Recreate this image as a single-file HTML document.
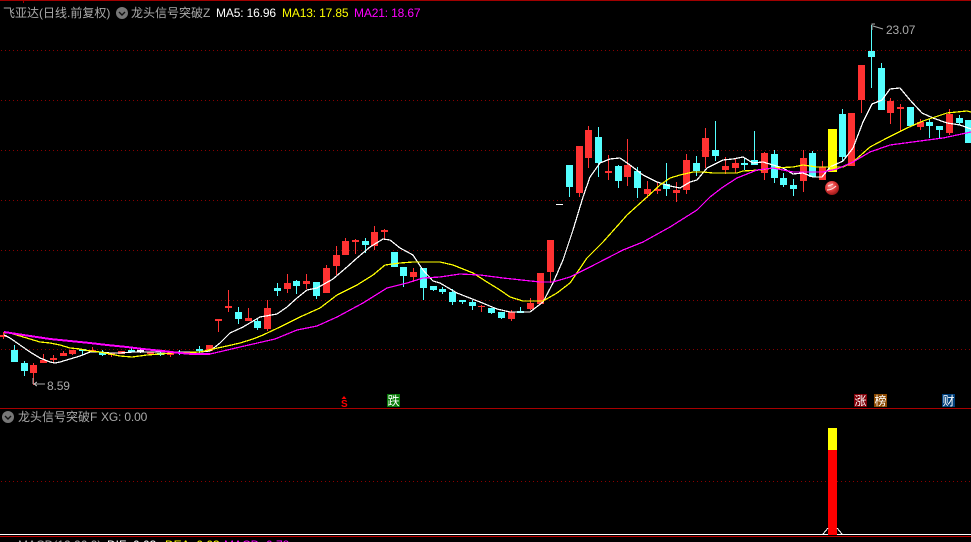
<!DOCTYPE html>
<html><head><meta charset="utf-8"><style>
html,body{margin:0;padding:0;background:#000;width:971px;height:542px;overflow:hidden}
svg{display:block;position:absolute;left:0;top:0}
text{font-family:"Liberation Sans","WenQuanYi Zen Hei","Noto Sans CJK SC",sans-serif;font-size:12px}
.m{letter-spacing:-.15px}
</style></head><body>
<svg width="971" height="542" viewBox="0 0 971 542" xmlns="http://www.w3.org/2000/svg">
<defs><radialGradient id="b" cx="40%" cy="35%" r="70%"><stop offset="0" stop-color="#ff9a9a"/><stop offset=".5" stop-color="#e23a3a"/><stop offset="1" stop-color="#8e1515"/></radialGradient></defs>
<rect width="971" height="542" fill="#000"/>
<g stroke="#8a0000" stroke-width="1" stroke-dasharray="1 3" shape-rendering="crispEdges">
<path d="M1 50.5H971M1 100.5H971M1 150.5H971M1 200.5H971M1 250.5H971M1 300.5H971M1 349.5H971M1 481.5H971"/>
</g>
<g shape-rendering="crispEdges">
<path fill="#ff3232" d="M0 335h7v2h-7zM3 332h1v7h-1z
M30 365h7v8h-7zM33 363h1v22h-1z
M40 360h7v3h-7zM43 354h1v9h-1z
M50 358h7v2h-7zM53 355h1v8h-1z
M60 353h7v3h-7zM63 351h1v5h-1z
M69 350h7v4h-7zM72 350h1v5h-1z
M89 350h7v2h-7zM92 347h1v5h-1z
M108 353h7v2h-7zM111 353h1v4h-1z
M118 351h7v3h-7z
M147 352h7v2h-7zM150 352h1v3h-1z
M167 352h7v3h-7zM170 352h1v5h-1z
M186 353h7v1h-7zM189 352h1v3h-1z
M206 345h7v6h-7zM209 345h1v7h-1z
M215 319h7v2h-7zM218 319h1v13h-1z
M225 306h7v2h-7zM228 290h1v22h-1z
M245 318h7v3h-7zM248 308h1v13h-1z
M264 308h7v21h-7zM267 300h1v31h-1z
M284 283h7v6h-7zM287 274h1v19h-1z
M303 281h7v3h-7zM306 274h1v15h-1z
M323 268h7v25h-7zM326 265h1v28h-1z
M333 255h7v11h-7zM336 246h1v29h-1z
M342 241h7v14h-7zM345 238h1v17h-1z
M352 240h7v2h-7zM355 239h1v15h-1z
M371 232h7v14h-7zM374 226h1v24h-1z
M381 230h7v2h-7zM384 229h1v10h-1z
M410 272h7v5h-7zM413 268h1v14h-1z
M478 306h7v1h-7zM481 305h1v7h-1z
M508 312h7v7h-7zM511 310h1v11h-1z
M527 303h7v6h-7zM530 298h1v12h-1z
M537 273h7v31h-7z
M547 240h7v32h-7zM550 240h1v43h-1z
M576 146h7v47h-7zM579 146h1v51h-1z
M585 130h7v28h-7zM588 126h1v42h-1z
M605 171h7v2h-7zM608 155h1v25h-1z
M624 165h7v12h-7zM627 139h1v47h-1z
M644 189h7v5h-7zM647 181h1v17h-1z
M654 189h7v2h-7zM657 182h1v12h-1z
M673 190h7v3h-7zM676 182h1v20h-1z
M683 160h7v30h-7zM686 154h1v40h-1z
M702 138h7v19h-7zM705 128h1v40h-1z
M722 166h7v4h-7zM725 157h1v17h-1z
M732 163h7v5h-7zM735 158h1v15h-1z
M761 153h7v20h-7zM764 152h1v28h-1z
M800 158h7v23h-7zM803 150h1v42h-1z
M819 167h7v13h-7zM822 161h1v19h-1z
M848 113h7v53h-7z
M858 65h7v35h-7zM861 65h1v48h-1z
M887 101h7v12h-7zM890 98h1v26h-1z
M897 107h7v2h-7zM900 104h1v27h-1z
M917 122h7v5h-7zM920 119h1v11h-1z
M946 114h7v19h-7zM949 109h1v26h-1z"/>
<path fill="#54ffff" d="M11 350h7v12h-7zM14 345h1v17h-1z
M21 363h7v8h-7zM24 361h1v15h-1z
M79 349h7v2h-7zM82 349h1v6h-1z
M99 352h7v3h-7zM102 350h1v6h-1z
M128 350h7v2h-7zM131 348h1v4h-1z
M157 353h7v2h-7zM160 351h1v5h-1z
M176 352h7v1h-7zM179 350h1v5h-1z
M196 349h7v2h-7zM199 346h1v7h-1z
M235 312h7v7h-7zM238 307h1v17h-1z
M254 321h7v7h-7zM257 318h1v12h-1z
M274 288h7v3h-7zM277 283h1v13h-1z
M293 281h7v5h-7zM296 280h1v14h-1z
M313 282h7v14h-7zM316 282h1v17h-1z
M362 241h7v4h-7zM365 238h1v15h-1z
M391 252h7v15h-7z
M400 267h7v9h-7zM403 267h1v20h-1z
M420 268h7v20h-7zM423 268h1v32h-1z
M430 286h7v4h-7zM433 286h1v5h-1z
M439 289h7v3h-7zM442 287h1v7h-1z
M449 292h7v10h-7zM452 289h1v16h-1z
M459 300h7v2h-7zM462 300h1v4h-1z
M469 302h7v4h-7zM472 300h1v10h-1z
M488 308h7v5h-7zM491 308h1v6h-1z
M498 312h7v6h-7zM501 312h1v7h-1z
M517 311h7v2h-7zM520 307h1v6h-1z
M566 165h7v22h-7zM569 165h1v32h-1z
M595 137h7v26h-7zM598 127h1v50h-1z
M615 166h7v15h-7zM618 165h1v23h-1z
M634 171h7v17h-7zM637 167h1v31h-1z
M663 184h7v5h-7zM666 163h1v33h-1z
M693 163h7v8h-7zM696 156h1v20h-1z
M712 150h7v6h-7zM715 121h1v40h-1z
M741 163h7v2h-7zM744 158h1v12h-1z
M751 160h7v5h-7zM754 131h1v34h-1z
M771 154h7v24h-7zM774 150h1v33h-1z
M780 178h7v7h-7zM783 173h1v14h-1z
M790 185h7v4h-7zM793 179h1v17h-1z
M809 153h7v24h-7zM812 151h1v26h-1z
M839 114h7v43h-7zM842 109h1v53h-1z
M868 51h7v6h-7zM871 25h1v63h-1z
M878 68h7v42h-7zM881 63h1v47h-1z
M907 107h7v19h-7z
M926 122h7v4h-7zM929 119h1v19h-1z
M936 126h7v4h-7zM939 126h1v13h-1z
M956 118h7v5h-7zM959 115h1v10h-1z
M965 120h6v23h-6z"/>
<path fill="#fff" d="M137 350h7v2h-7zM140 349h1v4h-1zM556 204h7v1h-7z"/>
<rect x="828" y="129" width="9" height="43" fill="#ff0"/>
</g>
<g fill="none" stroke-width="1.25" shape-rendering="crispEdges" stroke-linejoin="round">
<polyline stroke="#fff" points="4,335 10,338 20,345 30,352 40,358 50,362 55,363 60,362 70,359 80,356 90,352 100,352 110,353 120,353 133,352 150,352 167,352 177,352 200,352 210,351 220,343 230,333 243,327 260,317 277,314 287,307 297,298 307,290 317,288 333,279 347,267 357,258 370,247 383,239 390,240 400,248 413,255 423,270 433,281 440,283 457,293 480,302 497,309 510,312 530,312 543,302 553,283 563,260 573,230 583,197 590,177 600,163 610,159 620,158 630,165 643,175 657,182 670,186 680,188 690,182 697,180 707,168 723,160 733,159 743,157 753,163 763,162 773,165 783,168 793,174 803,173 813,177 822,177 830,167 843,161 853,148 863,122 872,104 882,100 890,89 900,88 910,100 922,113 933,118 947,123 960,125 971,129"/>
<polyline stroke="#ff0" points="4,333 10,333 20,336 30,339 40,342 50,343 60,345 70,348 80,349 90,351 100,352 110,354 120,356 132,357 147,355 160,354 173,353 200,352 213,349 227,346 240,343 253,339 263,335 280,327 300,317 320,308 337,295 357,285 373,275 385,265 400,263 413,262 440,262 453,265 473,273 487,282 500,290 510,297 523,301 543,301 557,293 570,283 587,258 603,242 620,223 627,215 647,197 660,185 670,178 680,175 693,172 703,172 713,173 737,173 743,171 760,170 773,168 793,167 803,165 817,167 843,167 853,162 870,147 887,138 907,128 923,121 947,113 967,111 971,112"/>
<polyline stroke="#f0f" points="4,332 17,334 30,336 50,339 70,341 90,343 107,345 127,347 143,349 163,351 180,353 193,354 210,354 223,351 240,347 275,339 297,330 317,326 337,317 363,303 387,288 407,283 423,278 440,277 460,274 480,275 503,278 540,282 553,282 570,277 590,267 623,250 643,242 670,227 697,210 710,197 723,187 737,178 757,170 773,168 793,172 823,172 837,169 853,162 870,152 890,145 920,141 943,138 971,132"/>
<polyline stroke="#f0f" stroke-width="2" points="4,332 17,334 30,336 50,339 70,341 90,343 107,345 127,347 143,349 163,351 180,353 193,354 210,354"/>
</g>
<circle cx="832" cy="188" r="7" fill="url(#b)"/>
<path d="M827 190q5 0 9-4M828 186q3-1 5-2" stroke="#ffe0e0" stroke-width="1.2" fill="none"/>
<path d="M45 384H34M37 382l-3 2 3 2M33 378v6" stroke="#aaa" fill="none" shape-rendering="crispEdges"/>
<text x="47" y="390" fill="#aaa" class="m">8.59</text>
<path d="M872 30V24h3M873 26l10 3" stroke="#aaa" fill="none"/>
<text x="886" y="34" fill="#aaa" class="m">23.07</text>
<g shape-rendering="crispEdges">
<rect x="0" y="0" width="971" height="1" fill="#a00000"/>
<rect x="23" y="0" width="1" height="3" fill="#a00000"/>
<rect x="0" y="408" width="971" height="1" fill="#a80000"/>
<rect x="0" y="536" width="971" height="1" fill="#c00000"/>
<rect x="0" y="534" width="971" height="1" fill="#fff"/>
<rect x="828" y="428" width="9" height="22" fill="#ff0"/>
<rect x="828" y="450" width="9" height="85" fill="#f00"/>
<rect x="387" y="394" width="13" height="13" fill="#0a7a0a"/>
<rect x="854" y="394" width="13" height="13" fill="#800008"/>
<rect x="874" y="394" width="13" height="13" fill="#8a4800"/>
<rect x="942" y="394" width="13" height="13" fill="#003f7a"/>
</g>
<path d="M823 534L828 528M837 528L842 534" stroke="#fff" fill="none" shape-rendering="crispEdges"/>
<path d="M344 396l2.500 3h-5z" fill="#f00"/>
<text x="341" y="407" fill="#f00" style="font-size:10px;font-weight:bold">S</text>
<text x="387.500" y="405" fill="#fff">跌</text>
<text x="854.500" y="405" fill="#fff">涨</text>
<text x="874.500" y="405" fill="#fff">榜</text>
<text x="942.500" y="405" fill="#fff">财</text>
<text x="3" y="17" fill="#aaa">飞亚达(日线.前复权)</text>
<circle cx="122" cy="13" r="6" fill="#777"/><path d="M119 12l3 3 3-3" stroke="#111" stroke-width="1.400" fill="none"/>
<text x="131" y="17" fill="#aaa">龙头信号突破Z</text>
<text x="216" y="17" fill="#fff" class="m">MA5: 16.96</text>
<text x="282" y="17" fill="#ff0" class="m">MA13: 17.85</text>
<text x="354" y="17" fill="#f0f" class="m">MA21: 18.67</text>
<circle cx="8" cy="417" r="6" fill="#777"/><path d="M5 416l3 3 3-3" stroke="#111" stroke-width="1.400" fill="none"/>
<text x="18" y="421" fill="#aaa">龙头信号突破F</text>
<text x="101" y="421" fill="#aaa" class="m">XG: 0.00</text>
<circle cx="8" cy="548" r="6" fill="#777"/>
<text x="18" y="549" fill="#aaa">MACD(12,26,9)</text>
<text x="107" y="549" fill="#fff">DIF: 0.03</text>
<text x="165" y="549" fill="#ff0">DEA: 0.03</text>
<text x="224" y="549" fill="#f0f">MACD: 0.78</text>
</svg>
</body></html>
